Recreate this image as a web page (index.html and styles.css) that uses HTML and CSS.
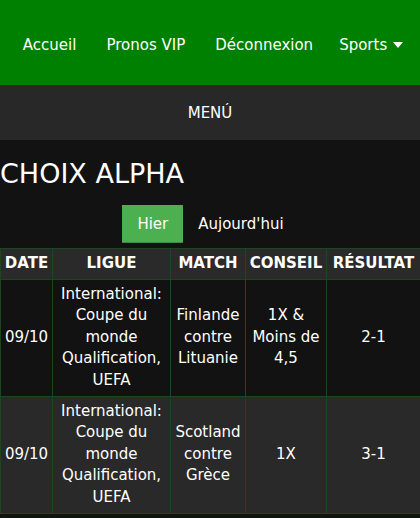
FILE: index.html
```html
<!DOCTYPE html>
<html lang="fr">
<head>
<meta charset="utf-8">
<link rel="stylesheet" href="styles.css">
</head>
<body>
<nav class="topnav">
  <a class="nav-link">Accueil</a>
  <a class="nav-link">Pronos VIP</a>
  <a class="nav-link">Déconnexion</a>
  <a class="nav-link dropdown">Sports <span class="caret"></span></a>
</nav>
<div class="menubar">MENÚ</div>
<h1 class="title">CHOIX ALPHA</h1>
<div class="tabs">
  <button class="tab active">Hier</button>
  <button class="tab">Aujourd'hui</button>
</div>
<table class="picks">
  <colgroup>
    <col class="c-date"><col class="c-ligue"><col class="c-match"><col class="c-conseil"><col class="c-result">
  </colgroup>
  <thead>
    <tr><th>DATE</th><th>LIGUE</th><th>MATCH</th><th>CONSEIL</th><th>RÉSULTAT</th></tr>
  </thead>
  <tbody>
    <tr>
      <td>09/10</td>
      <td>International: Coupe du monde Qualification, UEFA</td>
      <td>Finlande contre Lituanie</td>
      <td>1X &amp; Moins de 4,5</td>
      <td>2-1</td>
    </tr>
    <tr class="alt">
      <td>09/10</td>
      <td>International: Coupe du monde Qualification, UEFA</td>
      <td>Scotland contre Grèce</td>
      <td>1X</td>
      <td>3-1</td>
    </tr>
  </tbody>
</table>
</body>
</html>
```
FILE: styles.css
```css
html, body {
  margin: 0;
  padding: 0;
  background: #121212;
  color: #fff;
  font-family: "DejaVu Sans", Verdana, sans-serif;
  font-size: 15px;
}
.topnav {
  height: 85px;
  box-sizing: border-box;
  padding: 4px 17px 0 0;
  background: #008000;
  display: flex;
  align-items: center;
  justify-content: flex-end;
  gap: 30px;
}
.nav-link {
  color: #fff;
  font-size: 15px;
}
.nav-link.dropdown {
  margin-left: -4px;
}
.caret {
  display: inline-block;
  width: 0;
  height: 0;
  border-left: 5px solid transparent;
  border-right: 5px solid transparent;
  border-top: 6px solid #fff;
  vertical-align: middle;
  margin-left: 1px;
}
.menubar {
  height: 55px;
  background: #282828;
  display: flex;
  align-items: center;
  justify-content: center;
  padding-top: 1px;
  box-sizing: border-box;
  font-size: 15px;
}
.title {
  margin: 16px 0 13px;
  font-weight: normal;
  font-size: 27px;
  line-height: 36px;
}
.tabs {
  display: flex;
  justify-content: center;
  padding-left: 1px;
}
.tab {
  font-family: inherit;
  font-size: 15px;
  color: #fff;
  background: transparent;
  border: none;
  padding: 0 15px;
  height: 38px;
}
.tab.active {
  background: #4caf50;
  border-bottom: 1px solid #3d8b40;
}
.picks {
  margin-top: 5px;
  width: 100%;
  table-layout: fixed;
  border-collapse: collapse;
  text-align: center;
}
.c-date { width: 52px; }
.c-ligue { width: 118px; }
.c-match { width: 75px; }
.c-conseil { width: 81px; }
.c-result { width: 94px; }
.picks th, .picks td {
  border: 1px solid #1f451f;
  padding: 4px 1px;
  line-height: 21.6px;
}
.picks th {
  background: #2a2a2a;
  font-weight: bold;
  white-space: nowrap;
  overflow: visible;
}
.picks tr.alt td {
  background: #292929;
}
```
